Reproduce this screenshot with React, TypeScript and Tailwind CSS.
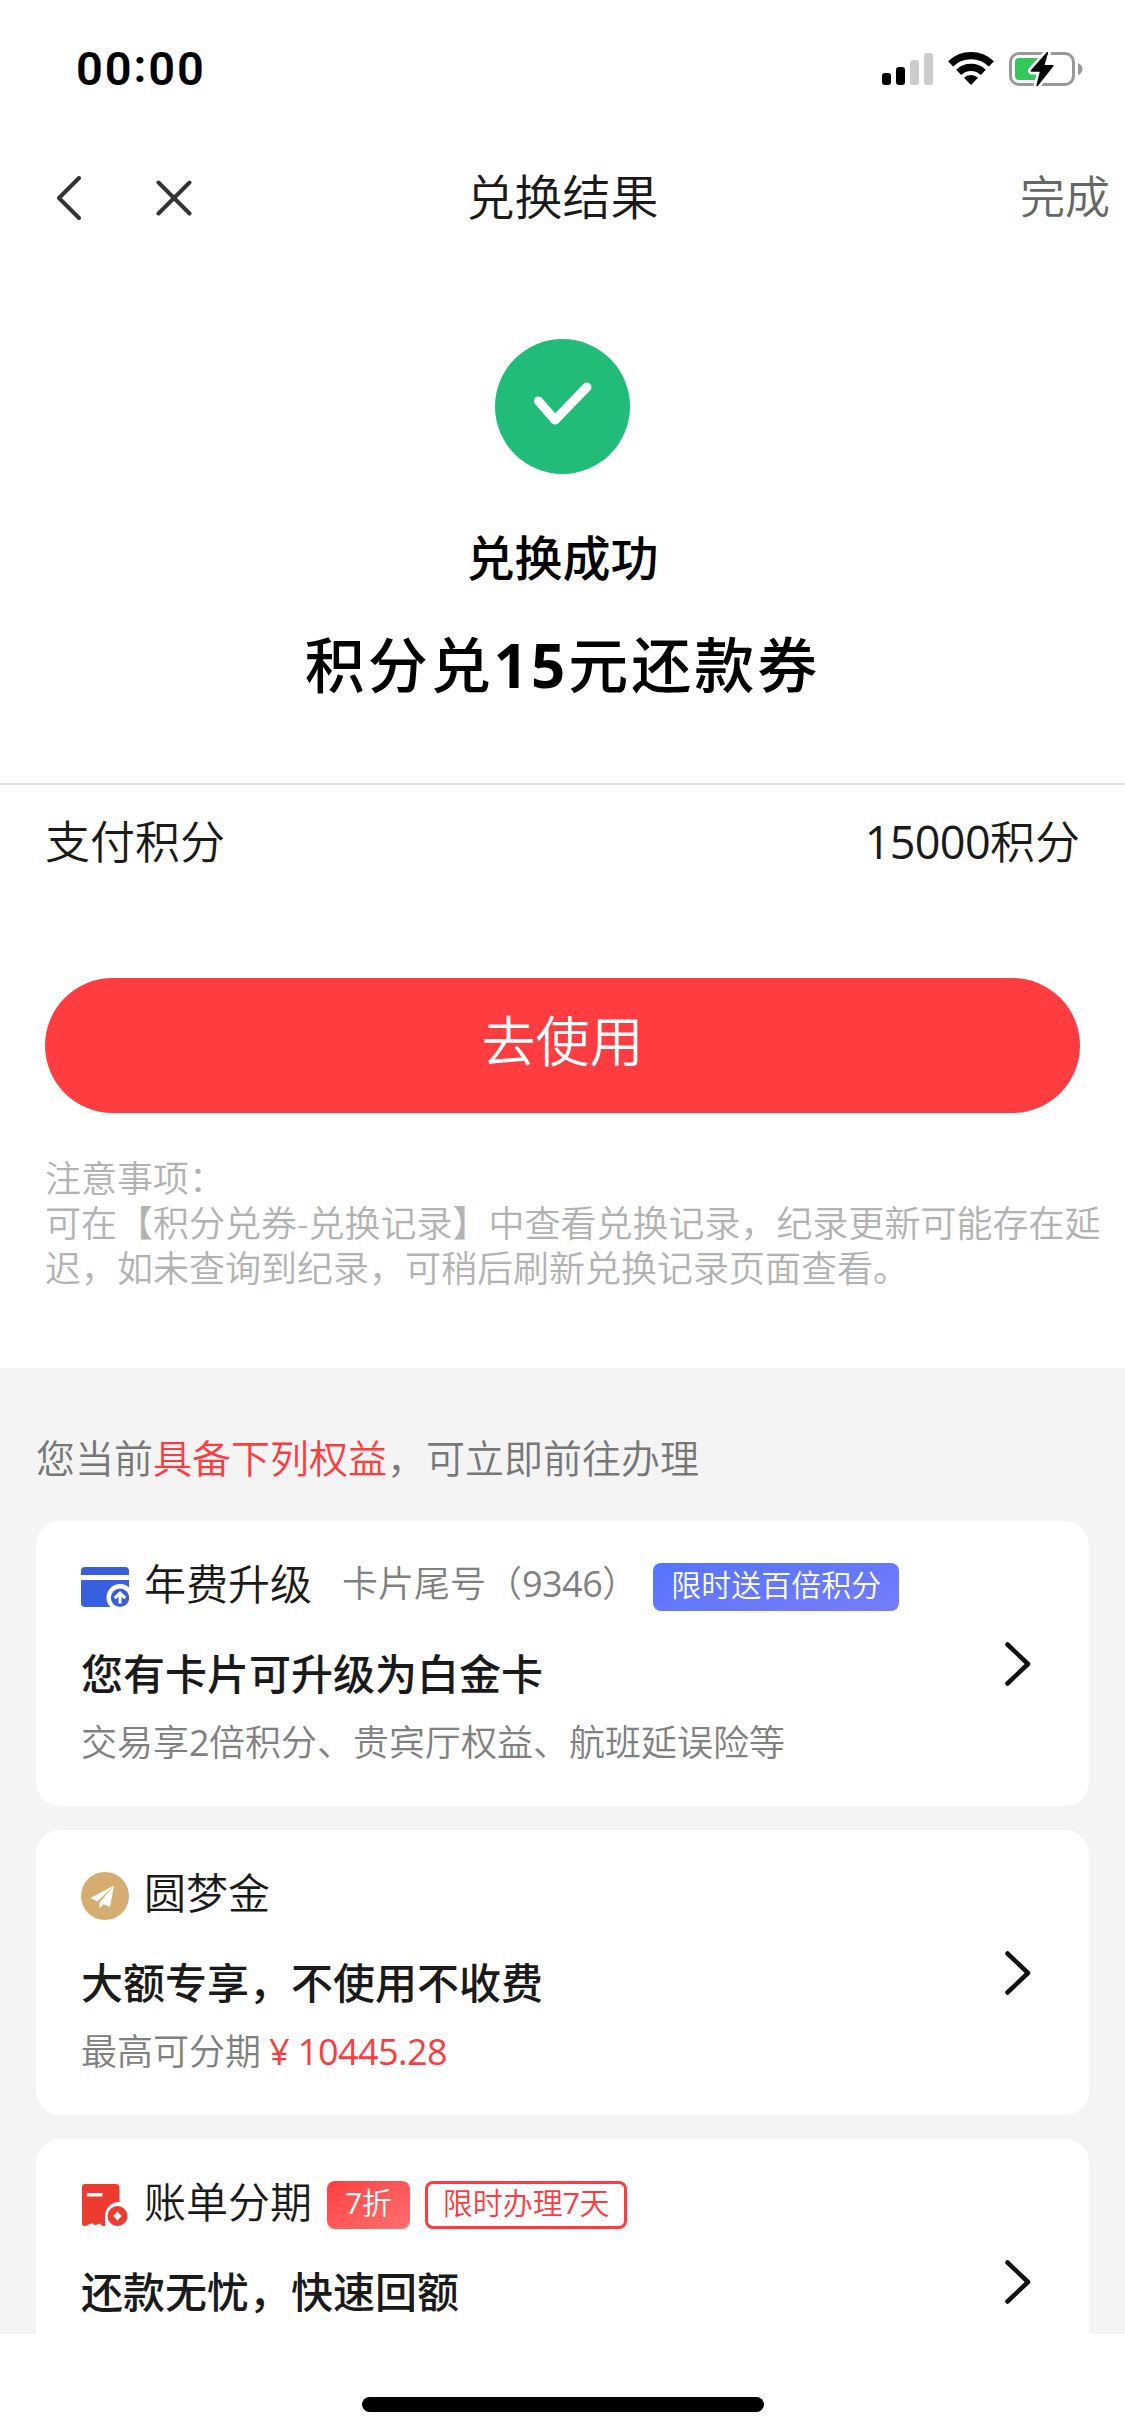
import type { ReactNode } from 'react';

type TBenefit = {
  name: string;
  icon: ReactNode;
  extra?: ReactNode;
  title: string;
  description?: ReactNode;
};

function StatusBar() {
  return (
    <div className="flex h-[132px] items-start justify-between pt-[39px] pr-[43px] pl-[76px]">
      <span className="font-['Roboto'] font-semibold text-[47px] text-black leading-[60px] tracking-[1.9px]">
        00<span className="relative -top-[3px]">:</span>00
      </span>
      <svg
        className="mt-[13px] overflow-visible"
        fill="none"
        height="34"
        viewBox="0 0 200 34"
        width="200"
      >
        <rect fill="#000" height="12" rx="3" width="9" x="0" y="21" />
        <rect fill="#000" height="18" rx="3" width="9" x="14" y="15" />
        <rect fill="#ccc" height="25" rx="3" width="9" x="28" y="8" />
        <rect fill="#ccc" height="32" rx="3" width="9" x="42" y="1" />
        <path
          d="M68.6 11.9A29.3 29.3 0 0 1 109.4 11.9M76.7 20.3A17.7 17.7 0 0 1 101.3 20.3"
          stroke="#000"
          strokeWidth="7.2"
        />
        <path d="M89 33L82 25.8A10 10 0 0 1 96 25.8Z" fill="#000" />
        <rect
          height="31"
          rx="8.5"
          stroke="#999"
          strokeWidth="3"
          width="63"
          x="128.5"
          y="1.5"
        />
        <path d="M196 11q4.500 2 4.500 6t-4.500 6z" fill="#999" />
        <path d="M137 6h24v22h-24q-4 0-4-4V10q0-4 4-4z" fill="#34c759" />
        <path
          d="M165.300.8L149.500 18.900h9.300L155.200 33.400L170.800 13.700h-9.300z"
          fill="#fff"
          stroke="#fff"
          strokeLinejoin="round"
          strokeWidth="7"
        />
        <path d="M161.500 4.500h10v24h-14z" fill="#fff" />
        <path
          d="M165.300.8L149.500 18.900h9.300L155.200 33.400L170.800 13.700h-9.300z"
          fill="#000"
          stroke="#000"
          strokeLinejoin="round"
          strokeWidth="1.600"
        />
      </svg>
    </div>
  );
}

function NavBar() {
  return (
    <div className="grid h-[132px] grid-cols-3 items-center pr-[15px] pl-[56px]">
      <div className="flex items-center gap-[75px]">
        <svg
          fill="none"
          height="44"
          stroke="#333"
          strokeLinecap="round"
          strokeLinejoin="round"
          strokeWidth="4"
          viewBox="0 0 25 44"
          width="25"
        >
          <path d="M23 2L3 22l20 20" />
        </svg>
        <svg
          fill="none"
          height="36"
          stroke="#333"
          strokeLinecap="round"
          strokeWidth="4"
          viewBox="0 0 36 36"
          width="36"
        >
          <path d="M2.500 2.500l31 31M33.500 2.500l-31 31" />
        </svg>
      </div>
      <h1 className="-ml-[41px] whitespace-nowrap pb-[3px] text-center text-[#1a1a1a] text-[48px]">
        兑换结果
      </h1>
      <button
        className="pb-[2px] text-right text-[#666] text-[45px]"
        type="button"
      >
        完成
      </button>
    </div>
  );
}

// digits run a touch heavier and tighter than the text around them
function Num({ children }: { children: ReactNode }) {
  return <span className="font-normal tracking-[-0.015em]">{children}</span>;
}

function Chevron() {
  return (
    <svg
      className="mt-[121px] shrink-0"
      fill="none"
      height="44"
      stroke="#111"
      strokeLinecap="round"
      strokeLinejoin="round"
      strokeWidth="4.500"
      viewBox="0 0 26 44"
      width="26"
    >
      <path d="M2.500 2.500L23 22L2.500 41.500" />
    </svg>
  );
}

function BenefitCard({ benefit }: { benefit: TBenefit }) {
  return (
    <div className="flex h-[285px] shrink-0 justify-between rounded-[24px] bg-white pr-[58px] pl-[45px]">
      <div className="pt-[42px]">
        <div className="flex h-[48px] items-center">
          {benefit.icon}
          <span className="-mt-[8px] ml-[15px] text-[#1a1a1a] text-[42px]">
            {benefit.name}
          </span>
          {benefit.extra}
        </div>
        <p className="mt-[33px] font-medium text-[#1a1a1a] text-[42px] leading-[60px]">
          {benefit.title}
        </p>
        <p className="mt-[14px] text-[#808080] text-[36px] leading-[50px]">
          {benefit.description}
        </p>
      </div>
      <Chevron />
    </div>
  );
}

export default function App() {
  return (
    <div className="flex h-[2436px] w-[1125px] flex-col overflow-hidden bg-white font-['Open_Sans','Noto_Sans_CJK_SC',sans-serif] font-[350]">
      <StatusBar />
      <NavBar />

      <div className="flex h-[519px] shrink-0 flex-col items-center pt-[75px]">
        <svg fill="none" height="135" viewBox="0 0 135 135" width="135">
          <circle cx="67.500" cy="67.500" fill="#21bd78" r="67.500" />
          <path
            d="M43.500 62L60 81L92 48"
            stroke="#fff"
            strokeLinecap="round"
            strokeLinejoin="round"
            strokeWidth="9"
          />
        </svg>
        <p className="mt-[54px] font-medium text-[48px] text-black leading-[60px]">
          兑换成功
        </p>
        <p className="mt-[37px] font-medium text-[60px] text-black leading-[80px] tracking-[3px]">
          积分兑<span className="font-bold">15</span>元还款券
        </p>
      </div>

      <div className="flex h-[120px] shrink-0 items-center justify-between border-[#e3e3e3] border-t-2 px-[45px] pb-[4px] text-[#1a1a1a] text-[45px]">
        <span>支付积分</span>
        <span>
          <Num>15000</Num>积分
        </span>
      </div>

      <button
        className="mx-[45px] mt-[75px] h-[135px] shrink-0 rounded-full bg-[#ff3d40] pb-[8px] text-[54px] text-white"
        type="button"
      >
        去使用
      </button>

      <div className="mt-[43px] h-[212px] shrink-0 whitespace-nowrap pl-[45px] text-[#b2b2b2] text-[36px] leading-[45px]">
        <p>注意事项：</p>
        <p>可在【积分兑券-兑换记录】中查看兑换记录，纪录更新可能存在延</p>
        <p>迟，如未查询到纪录，可稍后刷新兑换记录页面查看。</p>
      </div>

      <div className="flex h-[966px] shrink-0 flex-col gap-[24px] overflow-hidden bg-[#f4f4f4] px-[36px]">
        <p className="mt-[60px] mb-[9px] text-[#777] text-[39px] leading-[60px]">
          您当前<span className="text-[#ff3b3f]">具备下列权益</span>
          ，可立即前往办理
        </p>
        {BENEFITS.map((benefit) => (
          <BenefitCard benefit={benefit} key={benefit.name} />
        ))}
      </div>

      <div className="flex h-[102px] shrink-0 justify-center pt-[63px]">
        <div className="h-[15px] w-[402px] rounded-full bg-black" />
      </div>
    </div>
  );
}

const BENEFITS: TBenefit[] = [
  {
    name: '年费升级',
    icon: (
      <svg fill="none" height="48" viewBox="0 0 48 48" width="48">
        <path d="M0 12V8q0-4 4-4h40q4 0 4 4v4z" fill="#385fe0" />
        <path d="M0 17h48v23q0 4-4 4H4q-4 0-4-4z" fill="#385fe0" />
        <circle cx="39" cy="34.500" fill="#fff" r="13.500" />
        <path d="M28 44.300h20V48H28z" fill="#fff" />
        <circle cx="39" cy="34.800" fill="#385fe0" r="9.200" />
        <path
          d="M39 40.500v-9.500M33.800 35.200L39 30.200l5.200 5"
          stroke="#fff"
          strokeWidth="3"
        />
      </svg>
    ),
    extra: (
      <>
        <span className="-mt-[6px] ml-[30px] text-[#808080] text-[36px]">
          卡片尾号（<Num>9346</Num>）
        </span>
        <span className="ml-[15px] h-[48px] rounded-[8px] bg-gradient-to-br from-[#5274ff] to-[#777df8] px-[18px] text-[30px] text-white leading-[44px]">
          限时送百倍积分
        </span>
      </>
    ),
    title: '您有卡片可升级为白金卡',
    description: (
      <>
        交易享<Num>2</Num>倍积分、贵宾厅权益、航班延误险等
      </>
    ),
  },
  {
    name: '圆梦金',
    icon: (
      <svg fill="none" height="48" viewBox="0 0 48 48" width="48">
        <circle cx="24" cy="24" fill="#d6ad70" r="24" />
        <path
          d="M33 13.500L9.500 26l7 3.200zM33 13.500L18.500 30.500V36.500l4-4.200 6.500 2.700z"
          fill="#fff"
        />
      </svg>
    ),
    title: '大额专享，不使用不收费',
    description: (
      <>
        最高可分期
        <span className="ml-[8px] text-[#ff3b3f]">
          <Num>¥ 10445.28</Num>
        </span>
      </>
    ),
  },
  {
    name: '账单分期',
    icon: (
      <svg fill="none" height="48" viewBox="0 0 48 48" width="48">
        <path
          d="M1 6q0-3 3-3h31q3.500 0 3.500 3.500V45H24q-2 0-5-3-5 4-8 0-5 3-8 3-2 0-2-2z"
          fill="#ee3b30"
        />
        <path d="M24 48V35a14 14 0 0 1 15-14h9v27z" fill="#fff" />
        <path d="M18 42q3 4 6 3l-1-6z" fill="#ee3b30" />
        <path d="M6 12h15.500v3.500H6z" fill="#fff" />
        <circle cx="36.500" cy="35" fill="#ee3b30" r="10" />
        <path d="M36.500 30.500l4.200 4.500-4.200 4.500-4.200-4.500z" fill="#fff" />
      </svg>
    ),
    extra: (
      <>
        <span className="ml-[15px] h-[48px] rounded-[8px] bg-gradient-to-br from-[#ff3b3f] to-[#ff6f6f] px-[18px] text-[30px] text-white leading-[44px]">
          <Num>7</Num>折
        </span>
        <span className="ml-[15px] h-[48px] rounded-[8px] border-[#ff3b3f] border-[3px] px-[15px] text-[#ff3b3f] text-[30px] leading-[38px]">
          限时办理<Num>7</Num>天
        </span>
      </>
    ),
    title: '还款无忧，快速回额',
  },
];
